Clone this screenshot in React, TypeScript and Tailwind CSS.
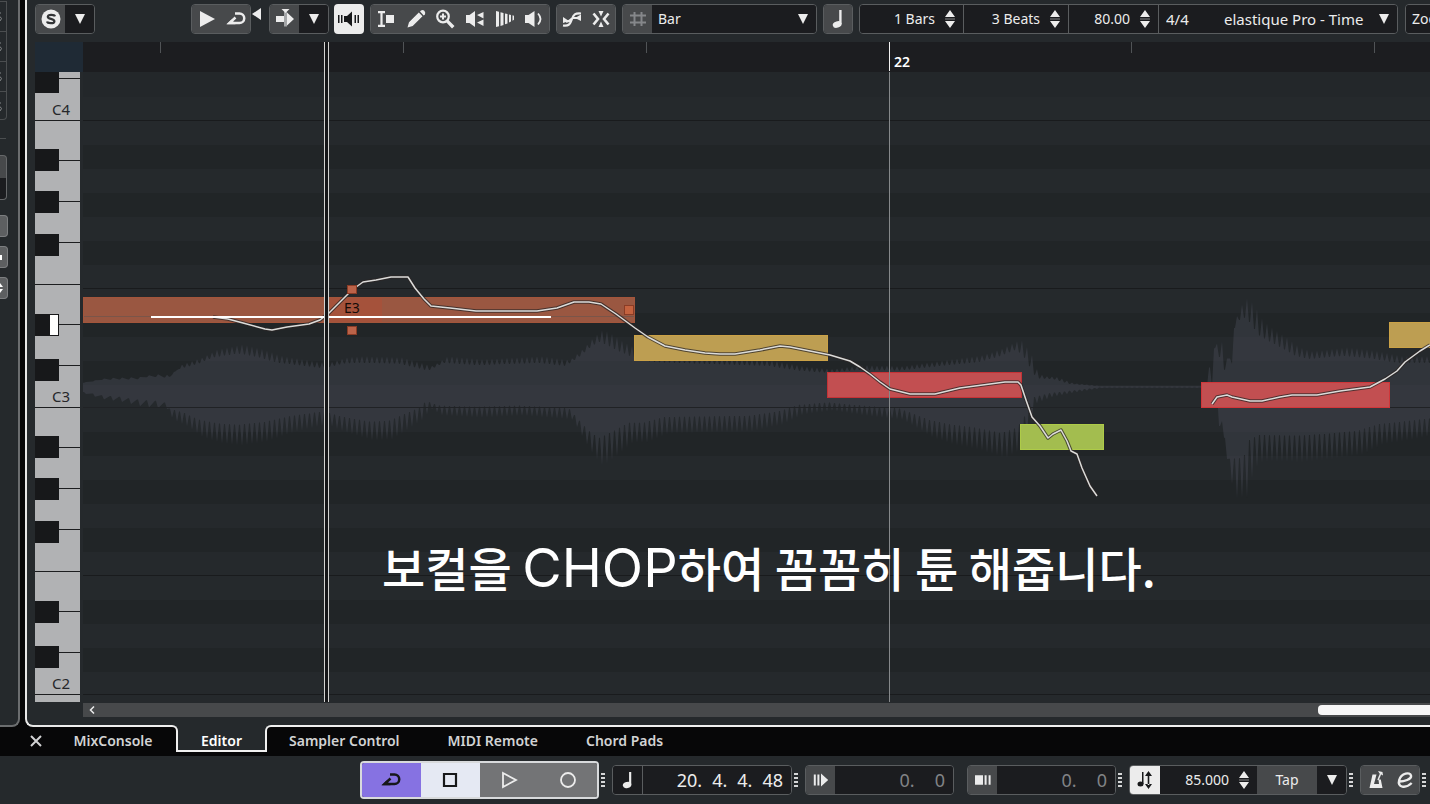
import React from "react";

type Point = [number, number];

const CANVAS_WIDTH = 1347;
const CANVAS_HEIGHT = 630;
const WAVE_CENTER = 315;

// rows of one octave, from B down to C
const OCTAVE_ROWS = [
  { note: "B", black: false },
  { note: "A#", black: true },
  { note: "A", black: false },
  { note: "G#", black: true },
  { note: "G", black: false },
  { note: "F#", black: true },
  { note: "F", black: false, line: true },
  { note: "E", black: false },
  { note: "D#", black: true },
  { note: "D", black: false },
  { note: "C#", black: true },
  { note: "C", black: false, line: true },
];

const UPPER: Point[] = [
  [0, 310], [20, 306], [57, 305], [67, 302], [87, 303], [95, 293], [117, 285], [132, 277], [157, 272],
  [177, 277], [197, 284], [217, 287], [242, 291], [262, 285], [277, 284], [317, 285], [347, 294],
  [362, 284], [397, 287], [457, 284], [484, 288], [497, 277], [507, 266], [517, 257], [527, 262],
  [537, 269], [550, 276], [570, 283], [687, 288], [717, 294], [747, 297], [777, 293], [817, 294],
  [867, 287], [897, 283], [917, 276], [935, 267], [945, 280], [951, 297], [957, 304], [972, 305],
  [987, 311], [1017, 314], [1126, 314], [1129, 278], [1134, 262], [1139, 280], [1144, 296], [1147, 290],
  [1151, 244], [1157, 230], [1162, 225], [1169, 233], [1177, 248], [1187, 256], [1202, 266],
  [1214, 275], [1227, 279], [1262, 275], [1287, 278], [1317, 284], [1347, 284],
];

const LOWER: Point[] = [
  [0, 322], [20, 328], [37, 330], [57, 335], [82, 337], [87, 348], [102, 355], [117, 366], [137, 372],
  [157, 374], [182, 370], [207, 361], [242, 353], [257, 360], [287, 369], [307, 368], [322, 358],
  [337, 348], [345, 337], [357, 344], [397, 346], [437, 344], [487, 348], [497, 366], [507, 383],
  [517, 395], [532, 384], [547, 371], [562, 371], [582, 362], [667, 360], [697, 353], [717, 343],
  [747, 339], [787, 345], [817, 348], [847, 366], [867, 373], [892, 378], [920, 387], [936, 378],
  [943, 361], [950, 332], [967, 325], [987, 321], [1017, 316], [1126, 316], [1134, 322],
  [1138, 376], [1144, 398], [1148, 427], [1162, 426], [1168, 398], [1177, 390], [1217, 391],
  [1247, 388], [1277, 383], [1297, 373], [1327, 368], [1347, 364],
];

const PITCH_A: Point[] = [
  [130, 245], [145, 247], [160, 251], [182, 257], [189, 258], [204, 255], [226, 252], [237, 248],
  [246, 241], [269, 218], [280, 210], [293, 208], [308, 205], [325, 205], [332, 216], [341, 227],
  [348, 234], [367, 236], [393, 239], [454, 239], [474, 236], [491, 230], [506, 230], [518, 232],
  [533, 242], [552, 256], [565, 265], [582, 274], [602, 278], [622, 281], [637, 282], [652, 282],
  [677, 278], [697, 274], [707, 275], [732, 280], [747, 283], [767, 289], [777, 295], [787, 302],
  [797, 310], [807, 317], [827, 322], [852, 322], [877, 316], [907, 312], [922, 310], [935, 310],
  [938, 313], [943, 328], [949, 345], [957, 354], [965, 366], [970, 362], [978, 358], [984, 369],
  [988, 379], [994, 382], [999, 396], [1007, 414], [1014, 424],
];

const PITCH_B: Point[] = [
  [1129, 332], [1134, 325], [1144, 323], [1149, 325], [1167, 329], [1179, 329], [1197, 325],
  [1209, 323], [1234, 323], [1257, 319], [1287, 315], [1302, 307], [1314, 299], [1322, 290],
  [1337, 279], [1347, 273],
];

function levelAt(points: Point[], x: number) {
  for (let i = 1; i < points.length; i++) {
    const [x0, y0] = points[i - 1];
    const [x1, y1] = points[i];
    if (x <= x1) return y0 + ((y1 - y0) * (x - x0)) / (x1 - x0);
  }
  return points[points.length - 1][1];
}

// peaks reach the envelope, valleys fall back towards the centre
function spikes(points: Point[], valley: number) {
  const out: string[] = [];
  for (let x = 0; x <= CANVAS_WIDTH; x += x < 80 ? 9 : 5) {
    const peak = levelAt(points, x);
    const low = WAVE_CENTER + (levelAt(points, x + 2) - WAVE_CENTER) * valley;
    out.push(`${x},${low.toFixed(1)}`, `${x + 1},${low.toFixed(1)}`, `${x + 3},${peak.toFixed(1)}`);
  }
  return out;
}

const WAVE = [...spikes(UPPER, 0.78), ...spikes(LOWER, 0.64).reverse()].join(" ");

/* ---------- icons ---------- */

function Icon({ children, size = 20 }: { children: React.ReactNode; size?: number }) {
  return (
    <svg width={size} height={size} viewBox="0 0 20 20" fill="currentColor" className="shrink-0" aria-hidden="true">
      {children}
    </svg>
  );
}

const Down = () => (
  <svg width="10" height="10" viewBox="0 0 10 10" fill="currentColor" className="pointer-events-none shrink-0" aria-hidden="true">
    <path d="M0 0h10L5 10z" />
  </svg>
);

const Cycle = () => (
  <Icon>
    <path d="M9 4.500h4.500a4.700 4.700 0 0 1 0 9.500H3.500L9.500 8.500" fill="none" stroke="currentColor" strokeWidth="2.500" />
    <path d="M1 15.200L5.500 10.500l4 4.700z" />
  </Icon>
);

const QuarterNote = () => (
  <Icon>
    <path d="M11.200 1h2.400v14h-2.400z" />
    <ellipse cx="9.200" cy="15.500" rx="4.500" ry="3.200" transform="rotate(-15 9.200 15.500)" />
  </Icon>
);

/* ---------- small controls ---------- */

function ToolButton({ label, children }: { label: string; children: React.ReactNode }) {
  return (
    <button type="button" aria-label={label} className="flex h-7 w-[29px] shrink-0 grow items-center justify-center bg-[#47494b]">
      {children}
    </button>
  );
}

function MenuButton({ label }: { label: string }) {
  return (
    <button type="button" aria-label={label} className="flex h-7 w-[29px] shrink-0 items-center justify-center bg-[#1b1c1f]">
      <Down />
    </button>
  );
}

function Group({ children, className = "" }: { children: React.ReactNode; className?: string }) {
  return (
    <div className={`flex h-[30px] shrink-0 overflow-hidden rounded border border-[#5a5d5f] ${className}`}>
      {children}
    </div>
  );
}

function Stepper({ label }: { label: string }) {
  return (
    <button type="button" aria-label={label} className="flex shrink-0 flex-col items-center justify-center">
      <svg width="10" height="18" viewBox="0 0 10 18" fill="currentColor" aria-hidden="true">
        <path d="M5 0l5 7H0zM5 18l5-7H0z" />
        <path d="M0 8.500h10v1H0z" opacity=".5" />
      </svg>
    </button>
  );
}

function ValueField({ label, value, className }: { label: string; value: string; className: string }) {
  return (
    <div className={`flex items-center gap-2.5 bg-[#1b1c1f] pr-2 ${className}`}>
      <input aria-label={label} defaultValue={value} className="w-full min-w-0 text-right text-sm outline-none" />
      <Stepper label={`${label} step`} />
    </div>
  );
}

function Dots() {
  return (
    <div className="flex w-[13px] shrink-0 flex-col gap-0.5 pl-0.5">
      <span className="h-0.5 w-1 bg-[#d5d6d7]" />
      <span className="h-0.5 w-1 bg-[#d5d6d7]" />
      <span className="h-0.5 w-1 bg-[#d5d6d7]" />
      <span className="h-0.5 w-1 bg-[#d5d6d7]" />
    </div>
  );
}

/* ---------- toolbar ---------- */

function Toolbar() {
  return (
    <div className="flex h-[42px] shrink-0 pt-1 pl-2">
      <Group>
        <ToolButton label="Solo editor">
          <Icon>
            <circle cx="10" cy="10" r="9.500" />
            <path d="M14 7.300C13.400 5.500 7 5 6.800 7.700C6.700 10.500 13.500 9.300 13.400 12.300C13.200 15 6.500 14.600 6 12.500" fill="none" stroke="#333537" strokeWidth="2.200" />
          </Icon>
        </ToolButton>
        <MenuButton label="Solo menu" />
      </Group>

      <Group className="ml-24">
        <ToolButton label="Audition">
          <Icon><path d="M3 2l15 8-15 8z" /></Icon>
        </ToolButton>
        <ToolButton label="Audition loop"><Cycle /></ToolButton>
      </Group>
      <button type="button" aria-label="Audition volume" className="mt-1 ml-px h-3 shrink-0">
        <svg width="9" height="12" viewBox="0 0 9 12" fill="currentColor" aria-hidden="true"><path d="M9 0v12L0 6z" /></svg>
      </button>

      <Group className="ml-2">
        <ToolButton label="Auto-scroll">
          <Icon>
            <path d="M1 7h11V3.500l7 6.500-7 6.500V13H1z" />
            <path d="M9 2.500h3v15H9z" fill="#a4a6a8" />
            <path d="M6.500 0h8l-4 4z" />
          </Icon>
        </ToolButton>
        <MenuButton label="Auto-scroll menu" />
      </Group>

      <button type="button" aria-label="Acoustic feedback" className="ml-[5px] flex h-[30px] w-[30px] shrink-0 items-center justify-center rounded bg-[#ececec] text-[#17181a]">
        <svg width="24" height="20" viewBox="0 0 24 20" fill="currentColor" aria-hidden="true">
          <path d="M7 7h3l5-4.500v15L10 13H7zM1 6h1.500v8H1zM4 6h1.500v8H4zM17.500 6H19v8h-1.500zM20.500 6H22v8h-1.500z" />
        </svg>
      </button>

      <Group className="ml-1.5 w-[180px]">
        <ToolButton label="Range selection">
          <Icon>
            <path d="M2 2h7v2.200H6.600v11.600H9V18H2v-2.200h2.400V4.200H2zM10 6h8v8h-8z" />
          </Icon>
        </ToolButton>
        <ToolButton label="Draw">
          <Icon><path d="M1.500 18.500l1.500-5.200L12.800 3.500l3.700 3.700L6.700 17zM14 2.500l1-1Q16.800 .2 18.300 1.700T19 5.500l-1.300 1z" /></Icon>
        </ToolButton>
        <ToolButton label="Zoom tool">
          <Icon>
            <circle cx="8" cy="7.500" r="5.800" fill="none" stroke="currentColor" strokeWidth="2.200" />
            <path d="M7 4.500h2v2h2v2H9v2H7v-2H5v-2h2zM13 10.500l6.500 6.500-2.500 2.500-6-6.500z" />
          </Icon>
        </ToolButton>
        <ToolButton label="Split audio">
          <Icon><path d="M1 6h3.500L10 2v16l-5.500-4H1zM18.500 3v6.500l-6.500-3.500zM18.500 10.500V17l-6.500-3.500z" /></Icon>
        </ToolButton>
        <ToolButton label="Warp">
          <Icon><path d="M1 2l3 .8v14.400L1 18zM5.500 3.200l3 .7v12l-3 1zM10 4.400l2.500 .6v9.500l-2.500 .8zM14 5.400l2 .5v6.700l-2 .8zM17.500 6.300l1.500.4v4l-1.500 1z" /></Icon>
        </ToolButton>
        <ToolButton label="Volume">
          <Icon>
            <path d="M1 6h3.500L10.500 2v16l-6-4H1z" />
            <path d="M14 4.500q5 5.500 0 11" fill="none" stroke="currentColor" strokeWidth="1.800" />
          </Icon>
        </ToolButton>
      </Group>

      <Group className="ml-1.5">
        <ToolButton label="Pitch curve">
          <Icon>
            <path d="M1 16.500c6 1 7.500-2 9-6.500s3-6 9-5.500M4 12.500c5 .5 4-3 7-3.500h5" fill="none" stroke="currentColor" strokeWidth="2.200" />
            <path d="M1 8l6 4-6 2zM19 5.500v6.500l-6-3z" />
          </Icon>
        </ToolButton>
        <ToolButton label="Snap to zero crossing">
          <Icon>
            <path d="M2.500 4.500L7 10l-4.500 5.500M17.500 4.500L13 10l4.500 5.500" fill="none" stroke="currentColor" strokeWidth="2.600" />
            <path d="M7.500 2h5L10 7.500zM7.500 18h5L10 12.500z" />
          </Icon>
        </ToolButton>
      </Group>

      <Group className="ml-1.5 w-[195px]">
        <button type="button" aria-label="Snap" className="flex h-7 w-[29px] shrink-0 items-center justify-center bg-[#47494b] text-[#85878a]">
          <Icon><path d="M6.500 3v14M13.500 3v14M2 6.500h16M2 13.500h16" stroke="currentColor" strokeWidth="2" /></Icon>
        </button>
        <div className="relative flex flex-1 items-center bg-[#1b1c1f]">
          <select aria-label="Grid type" className="w-full appearance-none pl-1.5 text-sm outline-none">
            <option>Bar</option>
          </select>
          <span className="pointer-events-none absolute right-2"><Down /></span>
        </div>
      </Group>

      <Group className="ml-1.5">
        <button type="button" aria-label="Note length" className="flex h-7 w-7 items-center justify-center bg-[#47494b]"><QuarterNote /></button>
      </Group>

      <Group className="ml-1.5 divide-x divide-[#5a5d5f]">
        <ValueField label="Bars" value="1 Bars" className="w-[104px]" />
        <ValueField label="Beats" value="3 Beats" className="w-[105px]" />
        <ValueField label="Tempo of clip" value="80.00" className="w-[90px]" />
        <div className="relative flex w-[238px] items-center bg-[#1b1c1f]">
          <input aria-label="Time signature" defaultValue="4/4" className="w-12 pl-[7px] text-[15px] outline-none" />
          <select aria-label="Algorithm" className="min-w-0 flex-1 appearance-none pl-[17px] text-[15px] outline-none">
            <option>elastique Pro - Time</option>
          </select>
          <span className="pointer-events-none absolute right-2"><Down /></span>
        </div>
      </Group>

      <Group className="ml-[7px]">
        <button type="button" className="w-20 bg-[#1b1c1f] pl-1.5 text-left text-sm">Zoom</button>
      </Group>
    </div>
  );
}

/* ---------- piano and canvas ---------- */

function BlackKey({ active = false, place }: { active?: boolean; place: string }) {
  return (
    <span className={`absolute left-0 z-10 flex h-[22px] w-6 justify-end bg-[#17181a] ${place}`}>
      {active && <span className="my-px mr-px w-2 bg-white" />}
    </span>
  );
}

const KEY = "relative shrink-0 border-b border-[#1c1d1f]";
const C_KEY = "flex h-[42px] items-end justify-end pr-2.5 pb-px text-[15px] leading-5";

function PianoOctave({ label, active = false }: { label: string; active?: boolean }) {
  return (
    <>
      <div className={`${KEY} h-10`}><BlackKey place="-bottom-[11px]" /></div>
      <div className={`${KEY} h-[41px]`}><BlackKey place="-bottom-3" /></div>
      <div className={`${KEY} h-[41px]`}><BlackKey place="-bottom-3.5" /></div>
      <div className={`${KEY} h-[42px]`} />
      <div className={`${KEY} h-10`}><BlackKey place="-bottom-3" active={active} /></div>
      <div className={`${KEY} h-[41px]`}><BlackKey place="-bottom-4" /></div>
      <div className={`${KEY} ${C_KEY}`}>{label}</div>
    </>
  );
}

function Piano() {
  return (
    <div className="flex w-[45px] shrink-0 flex-col overflow-hidden bg-[#b1b2b4] text-[#26272a]">
      <div className={`${KEY} h-[7px]`}><BlackKey place="-bottom-[15px]" /></div>
      <div className={`${KEY} ${C_KEY}`}>C4</div>
      <PianoOctave label="C3" active />
      <PianoOctave label="C2" />
    </div>
  );
}

function OctaveLanes() {
  return (
    <>
      {OCTAVE_ROWS.map((row) => (
        <div
          key={row.note}
          className={`shrink-0 ${row.note === "C" ? "h-[23px]" : "h-6"} ${row.black ? "bg-[#212527]" : "bg-[#25292c]"} ${row.line ? "border-b border-[#191b1d]" : ""}`}
        />
      ))}
    </>
  );
}

function Curve({ points }: { points: Point[] }) {
  const p = points.map((v) => v.join(",")).join(" ");
  return (
    <g fill="none" strokeLinejoin="round">
      <polyline points={p} stroke="#2b2626" strokeOpacity=".75" strokeWidth="3.500" />
      <polyline points={p} stroke="#dcdcda" strokeWidth="1.500" />
    </g>
  );
}

function PitchCanvas() {
  return (
    <div className="relative min-w-0 flex-1 overflow-hidden">
      <div className="flex flex-col">
        <div className="h-[25px] shrink-0 bg-[#23272a]" />
        <div className="h-6 shrink-0 border-b border-[#191b1d] bg-[#25292c]" />
        <OctaveLanes />
        <OctaveLanes />
        <div className="h-[7px] shrink-0 bg-[#25292c]" />
      </div>

      <svg width={CANVAS_WIDTH} height={CANVAS_HEIGHT} className="absolute top-0 left-0" aria-hidden="true">
        <polygon points={WAVE} fill="#4b4e59" fillOpacity=".4" />
        <path d="M0 335.500h1347" stroke="#202225" />
      </svg>

      {/* note segments */}
      <div className="absolute top-[225px] left-0 h-[26px] w-[552px] border border-[#a3553b] bg-[#9a5741]">
        <div className="absolute top-0 left-[246px] h-6 w-[52px] bg-[#a5523b]" />
        <div className="absolute top-[18px] left-0 h-px w-full bg-[#7a5549]" />
        <span className="absolute top-0 left-[260px] text-sm leading-5 text-[#150b08]">E3</span>
        <span className="absolute top-[7px] right-0 h-2.5 w-2.5 border border-[#8a3c26] bg-[#c4623f]" />
      </div>
      <div className="absolute top-[263px] left-[551px] h-[26px] w-[194px] border border-[#cba247] bg-[#bd9e52]" />
      <div className="absolute top-[300px] left-[744px] h-[26px] w-[195px] border border-[#c53236] bg-[#c24f51]" />
      <div className="absolute top-[352px] left-[937px] h-[26px] w-[84px] border border-[#aecb48] bg-[#a3bd4f]" />
      <div className="absolute top-[310px] left-[1118px] h-[26px] w-[189px] border border-[#d03639] bg-[#c24f51]" />
      <div className="absolute top-[250px] left-[1306px] h-[26px] w-[90px] border border-[#cba247] bg-[#bd9e52]" />

      <svg width={CANVAS_WIDTH} height={CANVAS_HEIGHT} className="absolute top-0 left-0" aria-hidden="true">
        <path d="M806.500 0v630" stroke="#85888a" />
        <Curve points={PITCH_A} />
        <Curve points={PITCH_B} />
        <path d="M68 245h400" stroke="#fff" strokeWidth="2" />
        <g fill="#bb6349" stroke="#8a3c26">
          <rect x="264.500" y="213.500" width="9" height="8" />
          <rect x="264.500" y="254.500" width="9" height="8" />
        </g>
      </svg>

      <p className="absolute top-[463px] left-[299px] font-['Noto_Sans_CJK_KR',sans-serif] text-[47px] leading-[64px] font-medium whitespace-nowrap text-white">
        보컬을 <span className="font-['Inter',sans-serif] text-[54px] font-normal">CHOP</span>하여 꼼꼼히 튠 해줍니다.
      </p>
    </div>
  );
}

function Ruler() {
  return (
    <div className="flex h-[30px] shrink-0 pl-2">
      <div className="w-12 shrink-0 bg-[#1f2a35]" />
      <div className="relative min-w-0 flex-1 overflow-hidden bg-[#1c1d20]">
        <svg width={CANVAS_WIDTH} height="30" className="absolute top-0 left-0" aria-hidden="true">
          <path d="M77.500 0v11M320.500 0v11M563.500 0v11M1048.500 0v11M1291.500 0v11" stroke="#505356" />
          <path d="M806.500 0v29" stroke="#f2f2f2" />
        </svg>
        <span className="absolute top-2.5 left-[811px] text-sm leading-5 font-semibold text-white">22</span>
      </div>
    </div>
  );
}

function EditorPanel() {
  return (
    <section aria-label="Editor" className="flex min-w-0 flex-1 flex-col overflow-hidden rounded-bl-lg border-b-2 border-l-2 border-[#e8e8e8] bg-[#25292c]">
      <Toolbar />
      <div className="relative">
        <Ruler />
        <div className="flex h-[630px] gap-[3px] pl-2">
          <Piano />
          <PitchCanvas />
        </div>
        {/* playhead */}
        <div className="absolute top-0 left-[297px] h-full w-[5px] border-x border-[#d2d2d0] bg-[#141517]" />
      </div>
      <div className="flex h-[23px] pl-14">
        <div className="mt-px flex h-3.5 flex-1 items-center justify-between bg-[#47494b]">
          <button type="button" aria-label="Scroll left" className="ml-1.5">
            <svg width="6" height="8" viewBox="0 0 6 8" fill="none" stroke="currentColor" strokeWidth="1.500" aria-hidden="true"><path d="M5 .5L1.500 4 5 7.500" /></svg>
          </button>
          <div className="h-2.5 w-28 rounded-l bg-[#f6f6f6]" />
        </div>
      </div>
    </section>
  );
}

/* ---------- strip left of the editor ---------- */

function LeftStrip() {
  return (
    <aside className="mr-[5px] w-5 shrink-0 overflow-hidden rounded-br-lg border-r-2 border-b-2 border-[#6b6d6f] bg-[#25292c]">
      <div className="mt-px h-[119px] w-[7px] divide-y divide-[#4b4e50] rounded-br border-y border-r border-[#4b4e50]">
        {[0, 1, 2, 3].map((row) => (
          <div key={row} className="flex h-[30px] items-center">
            <svg width="2" height="10" viewBox="0 0 2 10" fill="none" stroke="#85888a" aria-hidden="true"><path d="M0 1h1M0 4.500q3 2 0 4.500" /></svg>
          </div>
        ))}
      </div>
      <div className="mt-[18px] h-px w-1.5 bg-[#4b4e50]" />
      <div className="mt-4 h-[45px] w-[7px] rounded-r border-y border-r border-[#66686a] bg-linear-to-b from-[#47494b] from-50% to-[#1b1c1f] to-50%" />
      <div className="mt-[15px] h-[22px] w-2 rounded-r-sm border border-l-0 border-[#7c7e80] bg-[#5d5f61]" />
      <div className="mt-[9px] flex h-[22px] w-2 items-center rounded-r-sm border border-l-0 border-[#7c7e80] bg-[#5d5f61]">
        <span className="h-[5px] w-0.5 bg-white" />
      </div>
      <div className="mt-[9px] flex h-[22px] w-2 items-center rounded-r-sm border border-l-0 border-[#7c7e80] bg-[#5d5f61]">
        <svg width="3" height="12" viewBox="0 0 3 12" fill="#fff" aria-hidden="true"><path d="M0 1l3 4H0zM0 11l3-4H0z" /></svg>
      </div>
    </aside>
  );
}

/* ---------- lower zone tabs ---------- */

function LowerTabs() {
  return (
    <nav className="flex h-[29px] shrink-0 text-sm font-semibold text-[#d2d3d4]">
      <button type="button" aria-label="Close lower zone" className="flex w-[60px] items-center justify-center pl-3 pb-0.5">
        <svg width="12" height="12" viewBox="0 0 12 12" fill="none" stroke="currentColor" strokeWidth="2" aria-hidden="true"><path d="M1 1l10 10M11 1L1 11" /></svg>
      </button>
      <div role="tablist" className="relative -mt-0.5 mb-1 flex flex-1 bg-[#25292c]">
        <button type="button" role="tab" className="w-[118px] rounded-tr-md border-t-2 border-r-2 border-[#f0f0f0] bg-[#070708] pt-0.5 pr-2.5">MixConsole</button>
        <button type="button" role="tab" aria-selected="true" className="w-[87px] border-b-2 border-[#f0f0f0] pt-1.5 text-white">Editor</button>
        <div className="flex flex-1 gap-12 rounded-tl-md border-t-2 border-l-2 border-[#f0f0f0] bg-[#070708] pt-0.5 pl-[22px]">
          <button type="button" role="tab">Sampler Control</button>
          <button type="button" role="tab">MIDI Remote</button>
          <button type="button" role="tab">Chord Pads</button>
        </div>
      </div>
    </nav>
  );
}

/* ---------- transport ---------- */

function LocatorField({ label, children }: { label: string; children: React.ReactNode }) {
  return (
    <Group className="w-[149px]">
      <button type="button" aria-label={label} className="flex w-[29px] shrink-0 items-center justify-center bg-[#47494b]">{children}</button>
      <output aria-label={label} className="flex flex-1 items-center justify-end gap-5 bg-[#1b1c1f] pr-2 text-lg text-[#818386]">
        <span>0.</span>
        <span>0</span>
      </output>
    </Group>
  );
}

function Transport() {
  return (
    <footer className="flex h-12 shrink-0 items-center overflow-hidden bg-[#25292c] pl-90">
      <div className="flex h-[38px] w-[239px] shrink-0 overflow-hidden rounded border-2 border-[#d8dadc]">
        <button type="button" aria-label="Cycle" className="flex flex-1 items-center justify-center bg-[#8672e2] text-[#17181a]"><Cycle /></button>
        <button type="button" aria-label="Stop" className="flex flex-1 items-center justify-center bg-[#e5e9f3] text-[#17181a]">
          <Icon><path d="M4 4h12v12H4z" fill="none" stroke="currentColor" strokeWidth="2.200" /></Icon>
        </button>
        <button type="button" aria-label="Play" className="flex flex-1 items-center justify-center bg-[#737476]">
          <Icon><path d="M4 3l13 7-13 7z" fill="none" stroke="currentColor" strokeWidth="1.800" /></Icon>
        </button>
        <button type="button" aria-label="Record" className="flex flex-1 items-center justify-center bg-[#737476]">
          <Icon><circle cx="10" cy="10" r="7" fill="none" stroke="currentColor" strokeWidth="1.800" /></Icon>
        </button>
      </div>
      <Dots />

      <Group className="w-[180px] divide-x divide-[#5a5d5f]">
        <button type="button" aria-label="Time format" className="flex w-[30px] shrink-0 items-center justify-center bg-[#1b1c1f]">
          <Icon size={18}>
            <path d="M11.200 1h2.400v14h-2.400z" />
            <ellipse cx="9" cy="15.500" rx="4.800" ry="3.400" transform="rotate(-15 9 15.500)" />
          </Icon>
        </button>
        <output aria-label="Position" className="flex flex-1 items-center justify-end gap-2.5 bg-[#1b1c1f] pr-2 text-lg">
          <span>20.</span>
          <span>4.</span>
          <span>4.</span>
          <span>48</span>
        </output>
      </Group>
      <Dots />

      <LocatorField label="Left locator">
        <Icon size={16}><path d="M1 3h2.500v14H1zM5.500 3H8v14H5.500zM10 2l9 8-9 8z" /></Icon>
      </LocatorField>
      <div className="w-[13px] shrink-0" />
      <LocatorField label="Right locator">
        <Icon size={16}><path d="M0 4h10v12H0zM12 4h2.500v12H12zM17 4h2.500v12H17z" /></Icon>
      </LocatorField>
      <Dots />

      <Group>
        <button type="button" aria-label="Tempo track" className="flex w-[30px] shrink-0 items-center justify-center bg-[#ececec] text-[#17181a]">
          <Icon>
            <path d="M7 2h1.500v12H7zM12.700 5h1.600v10h-1.600zM13.500 1l3.500 5h-7zM13.500 19l3.500-5h-7z" />
            <ellipse cx="5.500" cy="14" rx="3" ry="2.500" />
          </Icon>
        </button>
        <ValueField label="Tempo" value="85.000" className="w-[97px]" />
        <button type="button" className="w-[60px] bg-[#47494b] text-sm">Tap</button>
        <MenuButton label="Tempo menu" />
      </Group>
      <Dots />

      <Group>
        <ToolButton label="Metronome">
          <Icon>
            <path d="M6.500 4.500h4L8 14h5l-.5-4.500h2.300L16.500 18H3.500z" />
            <path d="M12 10l2.500-6" stroke="currentColor" strokeWidth="1.500" />
            <path d="M12 1l4.500 1 .5 3.500-3.500-2z" />
          </Icon>
        </ToolButton>
        <ToolButton label="Click setup">
          <Icon><path d="M3 11.500C9 12 17 9 16 5.500S6.500 2.500 4.200 10s6.300 9 12.500 3" fill="none" stroke="currentColor" strokeWidth="2.400" /></Icon>
        </ToolButton>
      </Group>
      <Dots />
    </footer>
  );
}

export default function App() {
  return (
    <main className="flex min-h-screen flex-col overflow-hidden bg-[#070708] font-['Noto_Sans','Open_Sans',sans-serif] text-[#ececec]">
      <div className="flex">
        <LeftStrip />
        <EditorPanel />
      </div>
      <LowerTabs />
      <Transport />
    </main>
  );
}
